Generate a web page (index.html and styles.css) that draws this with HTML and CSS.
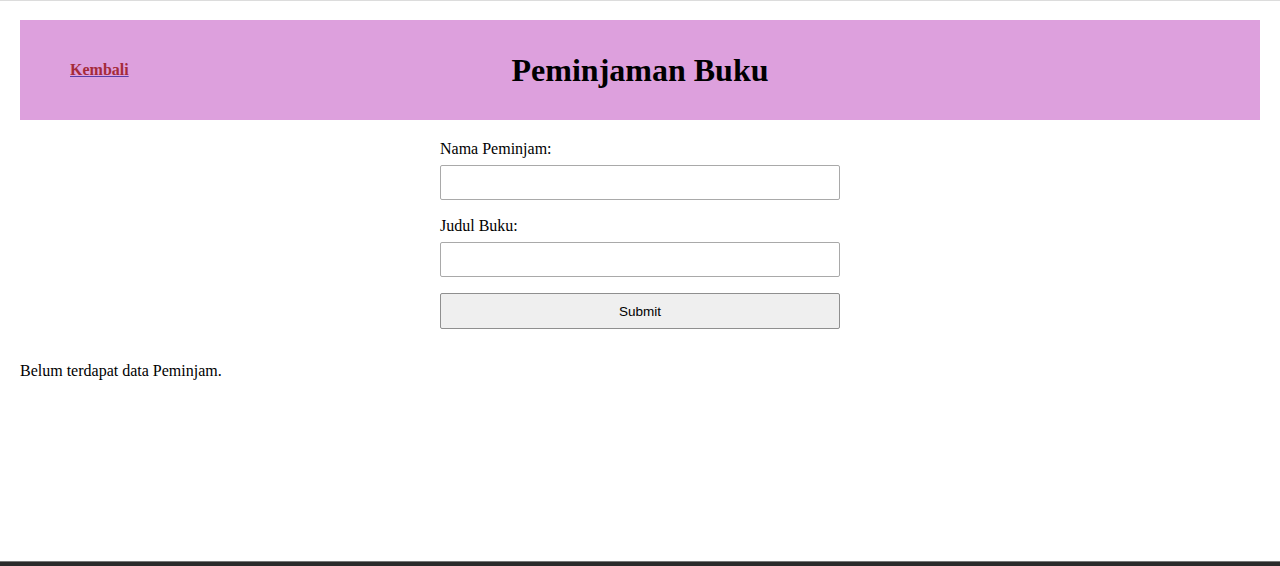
FILE: index.html
```html
<!DOCTYPE html>
<html lang="id">
<head>
<meta charset="utf-8">
<title>Peminjaman Buku</title>
<link rel="stylesheet" href="styles.css">
</head>
<body>
<div class="page">
  <header class="header">
    <div class="header-left"><a class="back" href="#">Kembali</a></div>
    <h1 class="title">Peminjaman Buku</h1>
    <div class="header-right"></div>
  </header>
  <form class="form">
    <label class="label" for="nama">Nama Peminjam:</label>
    <input class="input" id="nama" type="text">
    <label class="label" for="judul">Judul Buku:</label>
    <input class="input" id="judul" type="text">
    <button class="submit" type="button">Submit</button>
  </form>
  <p class="empty">Belum terdapat data Peminjam.</p>
</div>
<div class="bottom-bar"></div>
</body>
</html>
```
FILE: styles.css
```css
html, body {
  margin: 0;
  height: 100%;
}
body {
  font-family: "Liberation Serif", "Times New Roman", serif;
  font-size: 16px;
  color: #000;
  background: #fff;
  border-top: 1px solid #dcdcdc;
  box-sizing: border-box;
  display: flex;
  flex-direction: column;
}
.page {
  flex: 1;
  padding: 19px 20px 0;
}
.header {
  background: #dda0dd;
  height: 100px;
  display: grid;
  grid-template-columns: 1fr auto 1fr;
  align-items: center;
}
.header-left {
  padding-left: 50px;
  padding-bottom: 1px;
}
.back {
  font-weight: bold;
  color: #a52a3a;
  text-decoration-color: #5b3fa8;
  font-size: 16px;
}
.title {
  margin: 0;
  font-size: 32px;
  font-weight: bold;
}
.form {
  width: 400px;
  margin: 19px auto 0;
  display: flex;
  flex-direction: column;
}
.label {
  line-height: 20px;
  margin-bottom: 6px;
}
.input {
  height: 35px;
  box-sizing: border-box;
  border: 1px solid #a9a9a9;
  border-radius: 2px;
  margin: 0 0 16px;
  padding: 0 6px;
  font-size: 14px;
}
.submit {
  height: 36px;
  box-sizing: border-box;
  background: #efefef;
  border: 1px solid #8f8f8f;
  border-radius: 2px;
  font-family: "Liberation Sans", Arial, sans-serif;
  font-size: 13.5px;
  color: #000;
}
.empty {
  margin: 32px 0 0;
  line-height: 20px;
}
.bottom-bar {
  height: 4px;
  background: #2a2a2a;
  border-top: 1px solid #777;
}
```
